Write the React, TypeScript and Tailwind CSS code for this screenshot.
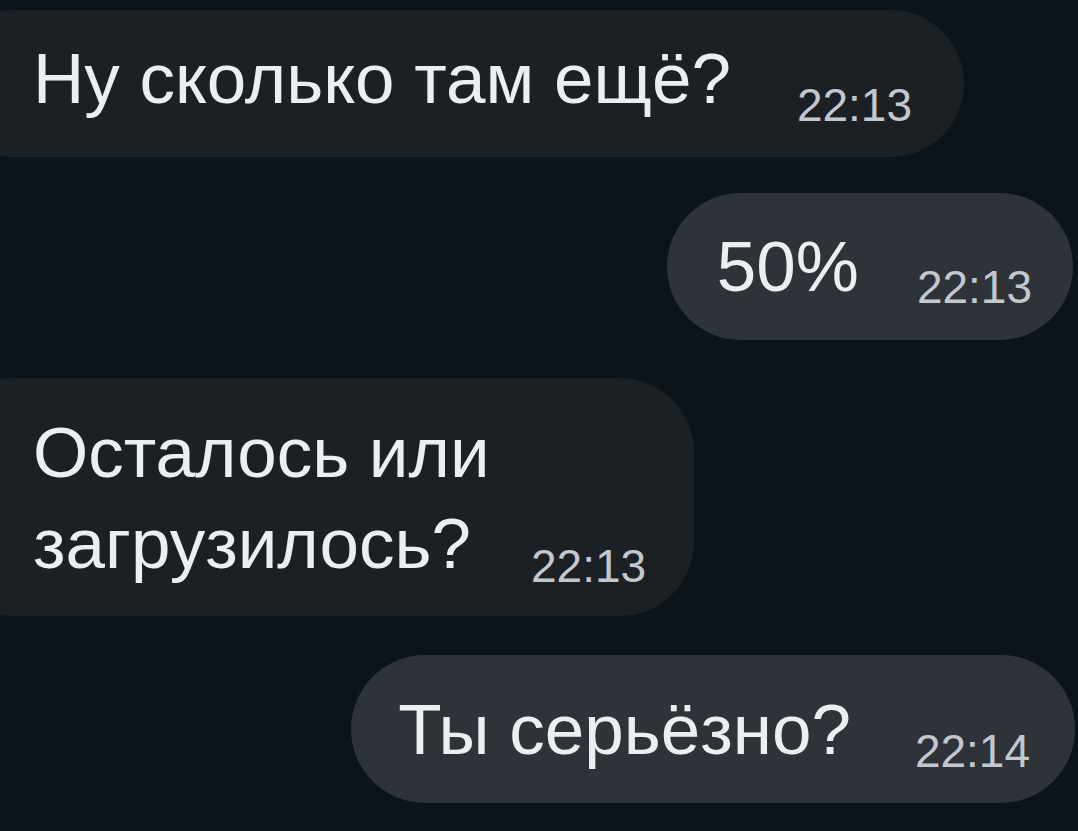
import React from "react";

const mainText = "text-[71px] leading-none text-[#eceff2] whitespace-nowrap";
const timeText = "text-[46px] leading-none text-[#c3c8ce] whitespace-nowrap";

const App: React.FC = () => {
  return (
    <div
      className="w-full h-[831px] overflow-hidden bg-[#0b141a] flex flex-col"
      style={{ fontFamily: '"Liberation Sans", Arial, sans-serif' }}
    >
      {/* incoming */}
      <div className="self-start ml-[-60px] mt-[10px] h-[147px] rounded-full bg-[#1b2024] flex items-center pl-[93px] pr-[52px] pb-[10px]">
        <div className="flex items-baseline gap-[66px]">
          <span className={mainText}>Ну сколько там ещё?</span>
          <span className={`${timeText} translate-y-[18px]`}>22:13</span>
        </div>
      </div>

      {/* outgoing */}
      <div className="self-end mr-[5px] mt-[36px] h-[147px] rounded-full bg-[#2d3338] flex items-center pl-[50px] pr-[41px]">
        <div className="flex items-baseline gap-[58px]">
          <span className={mainText}>50%</span>
          <span className={`${timeText} translate-y-[12px]`}>22:13</span>
        </div>
      </div>

      {/* incoming, two lines */}
      <div className="self-start ml-[-60px] mt-[38px] h-[238px] rounded-[74px] bg-[#1b2024] pl-[93px] pr-[48px] pt-[29px]">
        <p className="text-[71px] leading-[91px] text-[#eceff2] whitespace-nowrap">
          Осталось или
          <br />
          загрузилось?
          <span className={`${timeText} inline-block ml-[60px] translate-y-[14px]`}>22:13</span>
        </p>
      </div>

      {/* outgoing */}
      <div className="self-end mr-[3px] mt-[39px] h-[148px] rounded-full bg-[#2d3338] flex items-center pl-[47px] pr-[45px]">
        <div className="flex items-baseline gap-[64px]">
          <span className={mainText}>Ты серьёзно?</span>
          <span className={`${timeText} translate-y-[13px]`}>22:14</span>
        </div>
      </div>
    </div>
  );
};

export default App;
